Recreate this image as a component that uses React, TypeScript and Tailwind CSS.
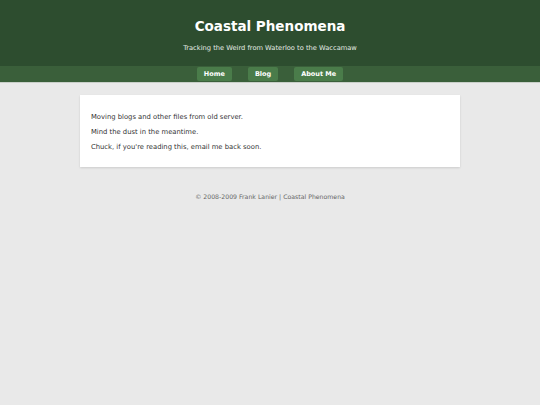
export default function App() {
  const links = ['Home', 'Blog', 'About Me'];
  return (
    <div className="min-h-[405px] bg-[#e9e9e9] font-['DejaVu_Sans',sans-serif]">
      <header className="bg-[#2d4d2f] text-white text-center h-[66px] pt-[18px]">
        <h1 className="text-[13.5px] font-bold leading-[17px]">Coastal Phenomena</h1>
        <p className="text-[6.7px] mt-[8px] text-[#e6ece6]">Tracking the Weird from Waterloo to the Waccamaw</p>
      </header>
      <nav className="bg-[#3a5f3a] h-[17px] flex justify-center items-start gap-4 pt-px border-b border-[#c9cfc9]">
        {links.map((l) => (
          <a key={l} className="bg-[#4a7c4a] text-white font-bold text-[6.5px] leading-[14px] h-[14px] px-[7px] rounded-[2px]">
            {l}
          </a>
        ))}
      </nav>
      <main className="mx-auto mt-[12px] w-[380px] bg-white shadow-[0_1px_2px_rgba(0,0,0,0.12)] px-[11px] pt-[17px] pb-[15px] text-[6.8px] text-[#333] leading-[10px]">
        <p>Moving blogs and other files from old server.</p>
        <p className="mt-[5px]">Mind the dust in the meantime.</p>
        <p className="mt-[5px]">Chuck, if you're reading this, email me back soon.</p>
      </main>
      <footer className="text-center text-[6.2px] text-[#666] mt-[25px]">
        © 2008-2009 Frank Lanier | Coastal Phenomena
      </footer>
    </div>
  );
}
